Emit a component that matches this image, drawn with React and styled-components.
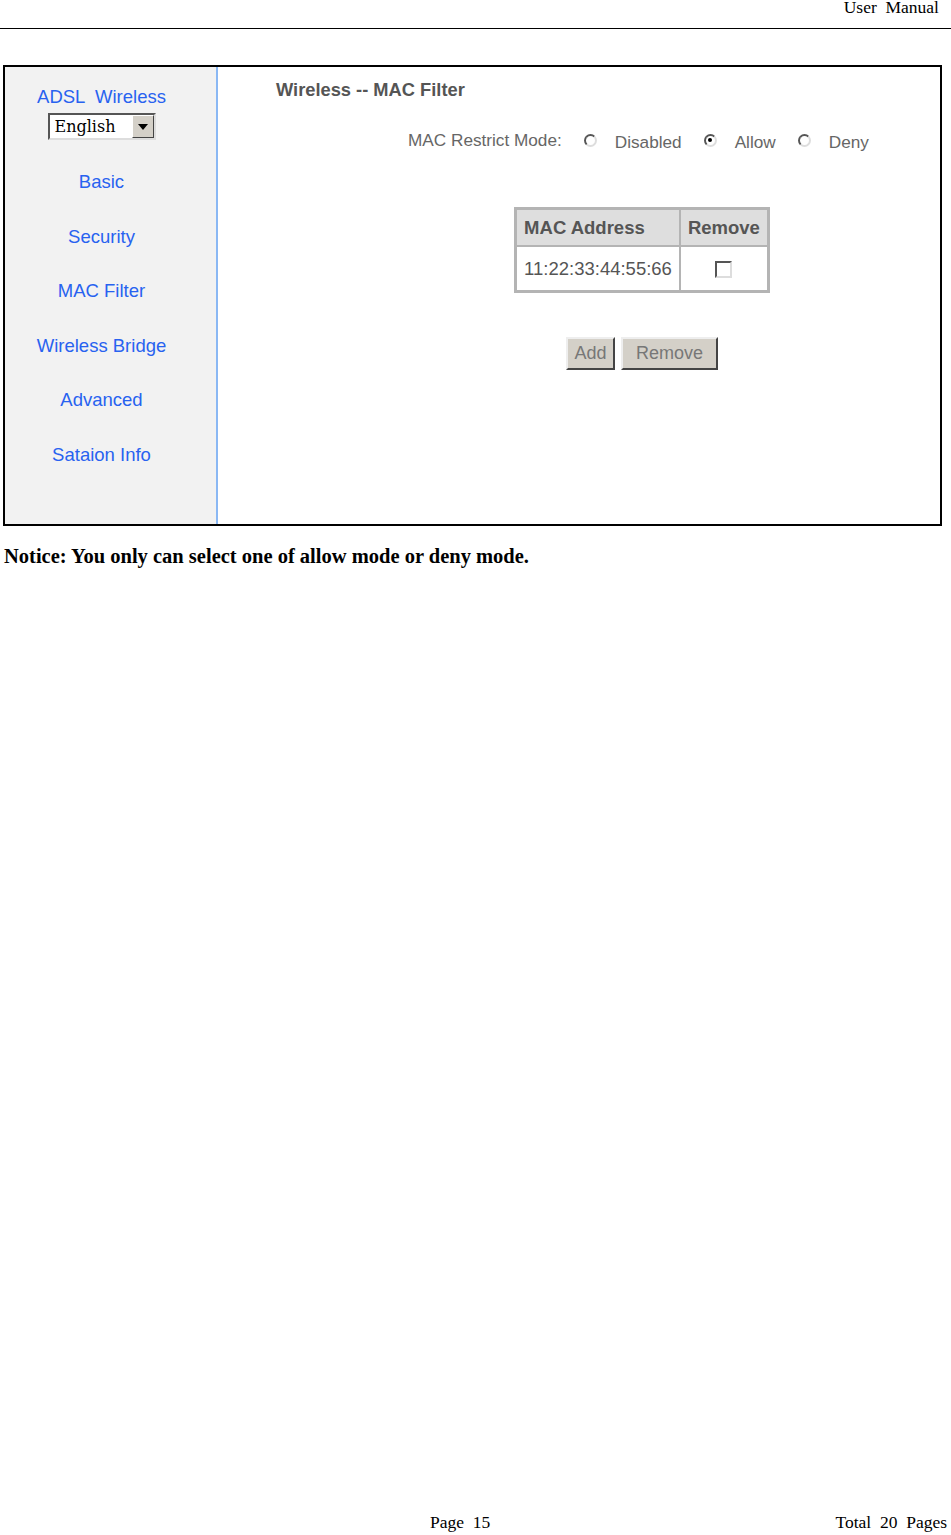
import React from 'react';
import styled, { createGlobalStyle } from 'styled-components';

const Global = createGlobalStyle`
  html, body { margin: 0; padding: 0; background: #fff; }
`;

const Page = styled.div`
  width: 951px;
  min-height: 1535px;
  display: flex;
  flex-direction: column;
  font-family: "Liberation Serif", serif;
  color: #000;
`;

const Header = styled.div`
  height: 28px;
  border-bottom: 1px solid #000;
  display: flex;
  justify-content: flex-end;
  padding-right: 12px;
  font-size: 17.5px;
  line-height: 14px;
  white-space: pre;
`;

const Shot = styled.div`
  margin: 36px 0 0 3px;
  width: 935px;
  height: 457px;
  border: 2px solid #000;
  display: flex;
  font-family: "Liberation Sans", Tahoma, sans-serif;
`;

const Sidebar = styled.div`
  width: 193px;
  background: #f2f2f2;
  border-right: 2px solid #8ab8f4;
  display: flex;
  flex-direction: column;
  align-items: center;
  padding: 20px 18px 0 0;
`;

const Brand = styled.div`
  color: #2862f0;
  font-size: 18.5px;
  line-height: 20px;
  white-space: pre;
`;

const Select = styled.div`
  margin-top: 6px;
  width: 104px;
  height: 23px;
  border: 2px solid;
  border-color: #555 #ddd #ddd #555;
  background: #fff;
  display: flex;
  align-items: stretch;
`;

const SelectText = styled.span`
  flex: 1;
  font-family: "DejaVu Serif", "Liberation Serif", serif;
  font-size: 16px;
  line-height: 23px;
  padding-left: 5px;
  color: #000;
`;

const SelectArrow = styled.span`
  width: 20px;
  background: #d4d0c8;
  border: 1px solid;
  border-color: #fff #444 #444 #fff;
  display: flex;
  align-items: center;
  justify-content: center;
  &::after {
    content: '';
    border-left: 5px solid transparent;
    border-right: 5px solid transparent;
    border-top: 6px solid #000;
  }
`;

const Nav = styled.div`
  margin-top: 15px;
  display: flex;
  flex-direction: column;
  align-items: center;
`;

const NavItem = styled.div`
  height: 54.5px;
  line-height: 54px;
  color: #2862f0;
  font-size: 18.5px;
  white-space: nowrap;
`;

const Main = styled.div`
  flex: 1;
  background: #fff;
  padding: 12px 0 0 58px;
`;

const Title = styled.div`
  font-weight: bold;
  font-size: 18.3px;
  color: #555;
  line-height: 22px;
`;

const Content = styled.div`
  margin: 29px 0 0 132px;
  width: 468px;
  display: flex;
  flex-direction: column;
  align-items: center;
  color: #666;
  font-size: 18.5px;
`;

const ModeRow = styled.div`
  align-self: flex-start;
  display: flex;
  align-items: center;
  height: 24px;
  white-space: nowrap;
  font-size: 17.2px;
`;

const ModeLabel = styled.span`
  margin-right: 22px;
  position: relative;
  top: -2px;
`;

const Radio = styled.span`
  flex: none;
  width: 9px;
  height: 9px;
  border-radius: 50%;
  border: 2px solid;
  border-color: #555 #ddd #ddd #555;
  background: #fff;
  display: flex;
  align-items: center;
  justify-content: center;
  margin-right: 18px;
  position: relative;
  top: -2px;
  &::after {
    content: '';
    width: 4px;
    height: 4px;
    border-radius: 50%;
    background: ${p => (p.$on ? '#000' : 'transparent')};
  }
`;

const RadioLabel = styled.span`
  margin-right: 22px;
`;

const Table = styled.table`
  margin-top: 53px;
  border-collapse: separate;
  border-spacing: 0;
  border: 2px solid #b4b4b4;
  font-size: 18.5px;
`;

const Th = styled.th`
  background: #dedede;
  color: #555;
  font-weight: bold;
  text-align: left;
  height: 35px;
  padding: 0 7px;
  border: 1px solid #b4b4b4;
  white-space: nowrap;
`;

const Td = styled.td`
  height: 43px;
  padding: 0 7px;
  border: 1px solid #b4b4b4;
  text-align: ${p => p.$align || 'left'};
  color: #555;
  white-space: nowrap;
`;

const Check = styled.span`
  display: inline-block;
  width: 13px;
  height: 13px;
  border: 2px solid;
  border-color: #555 #ddd #ddd #555;
  background: #fff;
  vertical-align: middle;
`;

const Buttons = styled.div`
  margin-top: 44px;
  display: flex;
  gap: 6px;
`;

const Button = styled.button`
  height: 33px;
  width: ${p => p.$w}px;
  background: #d4d0c8;
  border: 2px solid;
  border-color: #eee #444 #444 #eee;
  color: #777;
  font-family: "Liberation Sans", Tahoma, sans-serif;
  font-size: 18px;
  padding: 0;
`;

const Notice = styled.div`
  margin: 19px 0 0 4px;
  font-weight: bold;
  font-size: 20.5px;
  line-height: 22px;
`;

const Footer = styled.div`
  margin-top: auto;
  height: 22px;
  display: flex;
  font-size: 17.5px;
  line-height: 18px;
  white-space: pre;
`;

const PageNo = styled.span`
  margin-left: 430px;
`;

const Total = styled.span`
  margin-left: auto;
  margin-right: 4px;
`;

const navItems = ['Basic', 'Security', 'MAC Filter', 'Wireless Bridge', 'Advanced', 'Sataion Info'];

export default function App() {
  return (
    <Page>
      <Global />
      <Header>User  Manual</Header>
      <Shot>
        <Sidebar>
          <Brand>ADSL  Wireless</Brand>
          <Select>
            <SelectText>English</SelectText>
            <SelectArrow />
          </Select>
          <Nav>
            {navItems.map(n => <NavItem key={n}>{n}</NavItem>)}
          </Nav>
        </Sidebar>
        <Main>
          <Title>Wireless -- MAC Filter</Title>
          <Content>
            <ModeRow>
              <ModeLabel>MAC Restrict Mode:</ModeLabel>
              <Radio />
              <RadioLabel>Disabled</RadioLabel>
              <Radio $on />
              <RadioLabel>Allow</RadioLabel>
              <Radio />
              <RadioLabel>Deny</RadioLabel>
            </ModeRow>
            <Table>
              <thead>
                <tr>
                  <Th>MAC Address</Th>
                  <Th>Remove</Th>
                </tr>
              </thead>
              <tbody>
                <tr>
                  <Td>11:22:33:44:55:66</Td>
                  <Td $align="center"><Check /></Td>
                </tr>
              </tbody>
            </Table>
            <Buttons>
              <Button $w={49}>Add</Button>
              <Button $w={97}>Remove</Button>
            </Buttons>
          </Content>
        </Main>
      </Shot>
      <Notice>Notice: You only can select one of allow mode or deny mode.</Notice>
      <Footer>
        <PageNo>Page  15</PageNo>
        <Total>Total  20  Pages</Total>
      </Footer>
    </Page>
  );
}
